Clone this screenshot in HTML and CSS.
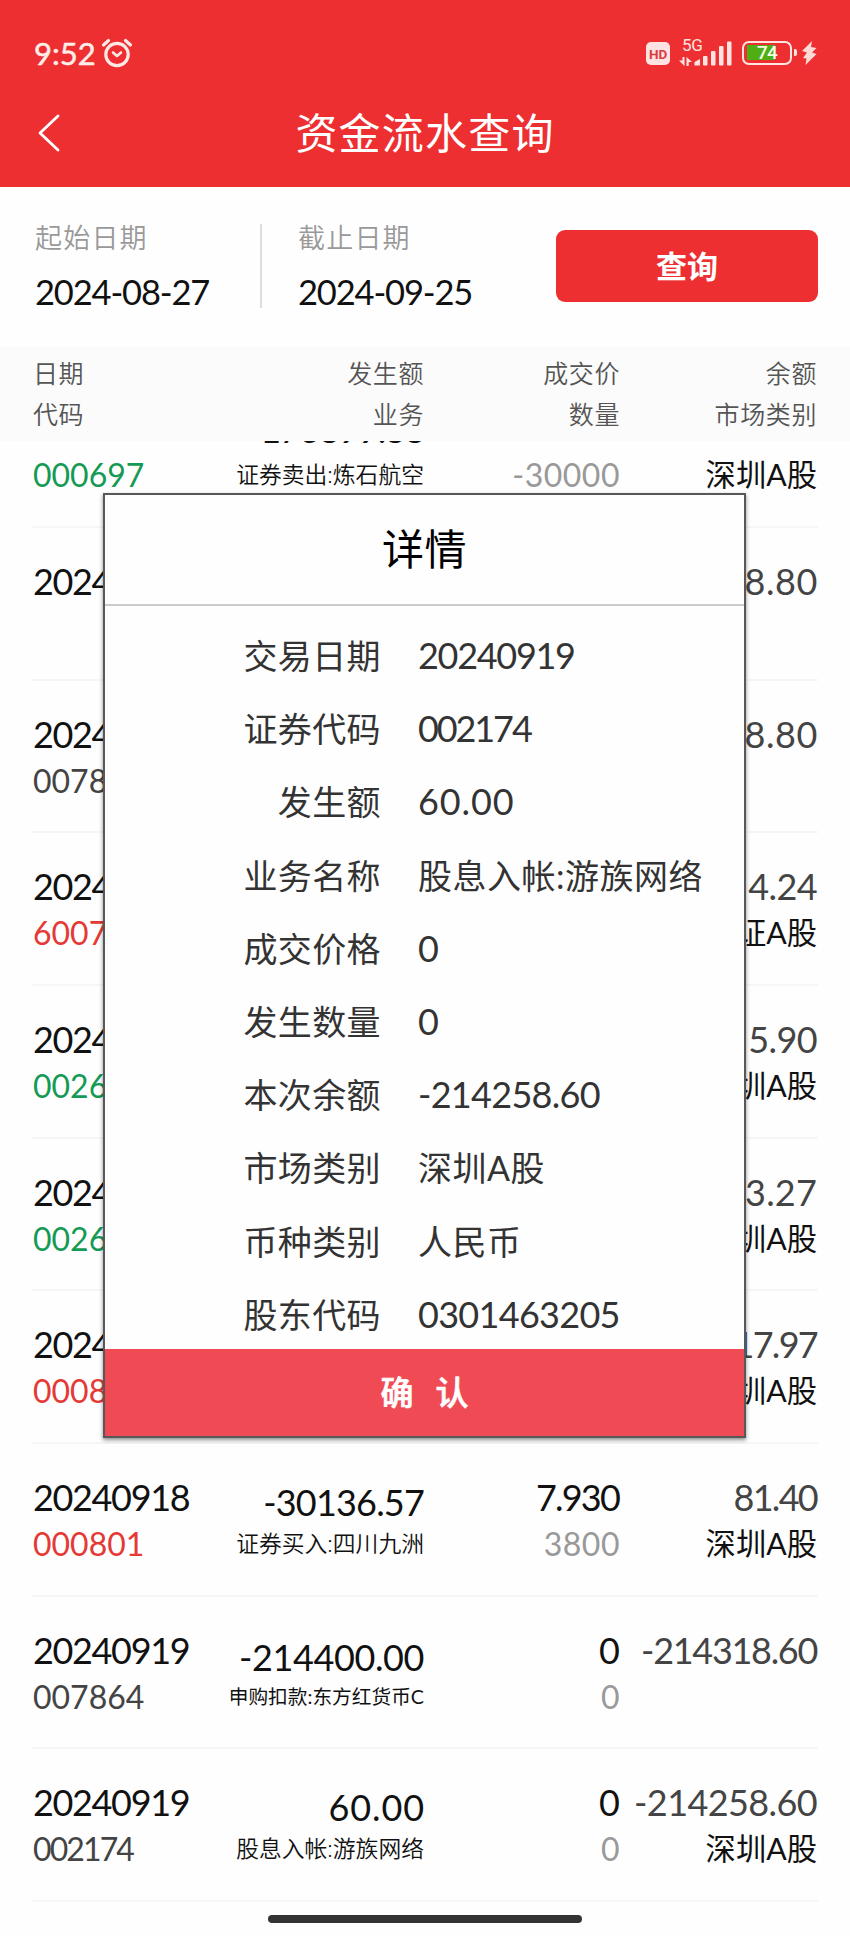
FILE: index.html
```
<!DOCTYPE html>
<html lang="zh-CN">
<head>
<meta charset="utf-8">
<title>资金流水查询</title>
<link rel="stylesheet" href="styles.css">
</head>
<body>
<div class="screen">
  <header class="top">
    <div class="status">
      <span class="clock">9:52</span>
      <svg class="alarm" width="32" height="30" viewBox="0 0 32 30" fill="none" stroke="#ffe9e4" stroke-linecap="round" stroke-linejoin="round"><circle cx="16" cy="16.500" r="11.200" stroke-width="3.200"/><path d="M2.500 7 L7.500 2.500 M29.500 7 L24.500 2.500" stroke-width="3.200"/><path d="M12 14.500 L16 18 L20 14.500" stroke-width="2.600"/></svg>
      <span class="hd">HD</span>
      <div class="signal">
        <span class="net">5G</span>
        <svg width="54" height="28" viewBox="0 0 54 28" fill="#ffe3e0"><path d="M3.500 18 H5.500 V27 L0 21.500 H3.500 Z M7.500 27 V18 L13 23 H9.700 V27 Z"/><path d="M15.500 26.500 V23 L21 20 V26.500 Z"/><rect x="24" y="17" width="4.500" height="9.500" rx="1"/><rect x="32" y="12" width="4.500" height="14.500" rx="1"/><rect x="40" y="7" width="4.500" height="19.500" rx="1"/><rect x="48" y="2.500" width="4.500" height="24" rx="1"/></svg>
      </div>
      <div class="battery"><span class="level">74</span></div>
      <svg class="bolt" width="15" height="24" viewBox="0 0 15 24" fill="#ffd9d6"><path d="M10 0 L0 10 L5 11.500 L1 17 L4.500 17.500 L3.500 24 L14.500 13 L10 11.500 L14.500 7 L9 6 Z"/></svg>
    </div>
    <div class="nav">
      <svg class="back" width="24" height="40" viewBox="0 0 24 40" fill="none" stroke="#fff" stroke-width="2.800" stroke-linecap="round" stroke-linejoin="round"><path d="M21 3 L3 20 L21 37"/></svg>
      <h1 class="title">资金流水查询</h1>
    </div>
  </header>

  <section class="filter">
    <div class="field start"><span class="caption">起始日期</span><span class="date">2024-08-27</span></div>
    <div class="field end"><span class="caption">截止日期</span><span class="date">2024-09-25</span></div>
    <button class="query">查询</button>
  </section>

  <section class="thead">
    <div class="cell"><span>日期</span><span>代码</span></div>
    <div class="cell right"><span>发生额</span><span>业务</span></div>
    <div class="cell right"><span>成交价</span><span>数量</span></div>
    <div class="cell right"><span>余额</span><span>市场类别</span></div>
  </section>

  <main class="list">
    <div class="row scrolled"><div class="col"><b class="code green">000697</b></div><div class="col right"><b class="sum">176899.88</b><b class="biz">证券卖出:炼石航空</b></div><div class="col right"><b class="qty">-30000</b></div><div class="col right"><b class="mkt">深圳A股</b></div></div>
    <div class="row"><div class="col"><b class="day">20240913</b></div><div class="col right"></div><div class="col right"></div><div class="col right"><b class="bal wide">8.80</b></div></div>
    <div class="row"><div class="col"><b class="day">20240913</b><b class="code">007864</b></div><div class="col right"></div><div class="col right"></div><div class="col right"><b class="bal wide">8.80</b></div></div>
    <div class="row"><div class="col"><b class="day">20240918</b><b class="code red">600764</b></div><div class="col right"></div><div class="col right"></div><div class="col right"><b class="bal">4.24</b><b class="mkt">上证A股</b></div></div>
    <div class="row"><div class="col"><b class="day">20240918</b><b class="code green">002640</b></div><div class="col right"></div><div class="col right"></div><div class="col right"><b class="bal">5.90</b><b class="mkt">深圳A股</b></div></div>
    <div class="row"><div class="col"><b class="day">20240918</b><b class="code green">002640</b></div><div class="col right"></div><div class="col right"></div><div class="col right"><b class="bal mid">53.27</b><b class="mkt">深圳A股</b></div></div>
    <div class="row"><div class="col"><b class="day">20240918</b><b class="code red">000801</b></div><div class="col right"></div><div class="col right"></div><div class="col right"><b class="bal tight">17.97</b><b class="mkt">深圳A股</b></div></div>
    <div class="row"><div class="col"><b class="day">20240918</b><b class="code red">000801</b></div><div class="col right"><b class="sum">-30136.57</b><b class="biz">证券买入:四川九洲</b></div><div class="col right"><b class="price four">7.930</b><b class="qty">3800</b></div><div class="col right"><b class="bal tight">81.40</b><b class="mkt">深圳A股</b></div></div>
    <div class="row"><div class="col"><b class="day">20240919</b><b class="code">007864</b></div><div class="col right low"><b class="sum">-214400.00</b><b class="biz small">申购扣款:东方红货币C</b></div><div class="col right"><b class="price">0</b><b class="qty">0</b></div><div class="col right"><b class="bal long">-214318.60</b></div></div>
    <div class="row"><div class="col"><b class="day">20240919</b><b class="code narrow">002174</b></div><div class="col right"><b class="sum wide">60.00</b><b class="biz">股息入帐:游族网络</b></div><div class="col right"><b class="price">0</b><b class="qty">0</b></div><div class="col right"><b class="bal">-214258.60</b><b class="mkt">深圳A股</b></div></div>
  </main>
  <div class="home"></div>

  <div class="dialog">
    <h2 class="dialog-title">详情</h2>
    <dl class="details">
      <dt>交易日期</dt><dd class="eight">20240919</dd>
      <dt>证券代码</dt><dd class="six">002174</dd>
      <dt>发生额</dt><dd class="sixty">60.00</dd>
      <dt>业务名称</dt><dd class="text">股息入帐:游族网络</dd>
      <dt>成交价格</dt><dd>0</dd>
      <dt>发生数量</dt><dd>0</dd>
      <dt>本次余额</dt><dd class="signed">-214258.60</dd>
      <dt>市场类别</dt><dd class="text">深圳A股</dd>
      <dt>币种类别</dt><dd class="text">人民币</dd>
      <dt>股东代码</dt><dd class="ten">0301463205</dd>
    </dl>
    <button class="confirm">确<span class="gap"></span>认</button>
  </div>
</div>
</body>
</html>
```
FILE: styles.css
```
* { box-sizing: border-box; margin: 0; padding: 0; }
body { background: #fff; }
.screen {
  position: relative;
  width: 850px;
  height: 1936px;
  overflow: hidden;
  background: #fefefe;
  font-family: Lato, "Noto Sans CJK SC", sans-serif;
  color: #111;
}
b, h1, h2 { font-weight: 400; }
button { border: 0; font-family: inherit; color: #fff; }

.top { height: 187px; background: #ed2f32; color: #fff; }
.status { display: flex; align-items: center; height: 80px; padding: 26px 33px 0 34px; }
.clock { width: 66px; font-size: 31px; line-height: 40px; font-weight: 400; letter-spacing: 0; color: #ffeee8; white-space: nowrap; -webkit-text-stroke: 0.500px #ffeee8; }
.alarm { margin-left: 1px; }
.hd { margin-left: auto; width: 24px; height: 23px; border-radius: 5px; background: #ffe3e3; color: #dc3b40; font: 700 13.500px/24px Roboto, sans-serif; text-align: center; letter-spacing: -0.2px; }
.signal { position: relative; width: 54px; height: 28px; margin-left: 9px; }
.net { position: absolute; left: 3px; top: -2px; font: 400 17px/17px Roboto, sans-serif; letter-spacing: -0.3px; color: #ffe3e0; }
.battery { position: relative; width: 50px; height: 24px; margin-left: 9px; margin-right: 3px; border: 2.500px solid #ffe6e0; border-radius: 7px; padding: 2px 3px; background: linear-gradient(#4fae14, #4fae14) 3px 2px / 28px 15px no-repeat; }
.battery::after { content: ""; position: absolute; right: -7px; top: 6px; width: 3px; height: 7px; border-radius: 0 2px 2px 0; background: #ffe6e0; }
.level { display: block; text-align: center; font: 500 19px/16px Roboto, sans-serif; letter-spacing: -0.8px; color: #f5ffe8; }
.bolt { margin-left: 7px; }
.nav { position: relative; display: flex; justify-content: center; height: 107px; padding-top: 25px; }
.back { position: absolute; left: 37px; top: 33px; }
.title { font-size: 42px; line-height: 56px; letter-spacing: 1.200px; }

.filter { display: flex; height: 160px; padding: 37px 32px 0 35px; }
.field { display: flex; flex-direction: column; height: 84px; }
.start { width: 227px; border-right: 2px solid #ddd; }
.end { width: 294px; padding-left: 36px; }
.caption { font-size: 27px; line-height: 28px; letter-spacing: 1.200px; color: #999; font-weight: 350; }
.date { margin-top: 19px; font-size: 34.500px; line-height: 42px; letter-spacing: -1.150px; white-space: nowrap; }
.query { width: 262px; height: 72px; margin-top: 6px; border-radius: 9px; background: #ed2f32; font-size: 31px; font-weight: 700; line-height: 70px; }

.thead, .row { display: grid; grid-template-columns: 131px 260px 196px 197px; }
.thead { height: 94px; padding: 6px 33px 0; background: #fbfbfb; color: #555; font-size: 25px; font-weight: 350; letter-spacing: 0.600px; }
.cell { display: flex; flex-direction: column; line-height: 41px; }
.cell.right { text-align: right; }

.list { height: 1461px; overflow: hidden; display: flex; flex-direction: column; justify-content: flex-end; }
.row { flex: none; height: 152.700px; margin: 0 32px; padding: 30px 1px 0; border-bottom: 2px solid #f6f6f6; }
.col { display: flex; flex-direction: column; white-space: nowrap; }
.right { align-items: flex-end; }
.col b { display: block; }
.scrolled .code, .scrolled .qty, .scrolled .mkt { margin-top: 46px; }
.scrolled .sum { margin: 1px 0 4px; letter-spacing: -1.300px; }
.day { font-size: 36px; line-height: 46px; letter-spacing: -1.350px; }
.code { font-size: 32px; line-height: 48px; color: #444; }
.code.narrow { letter-spacing: -1.900px; }
.code.green { color: #159a55; }
.code.red { color: #e53935; }
.sum { margin-top: 5px; font-size: 36px; line-height: 46px; letter-spacing: -0.800px; }
.sum.wide { letter-spacing: 0.900px; margin-right: -1px; }
.biz { font-size: 22.800px; line-height: 37px; font-weight: 350; }
.biz.small { font-size: 19.700px; line-height: 33px; font-weight: 400; }
.low .sum { margin-top: 7px; letter-spacing: -0.400px; }
.price { font-size: 36px; line-height: 46px; }
.price.four { letter-spacing: -1.800px; margin-right: 1px; }
.qty { font-size: 32px; line-height: 48px; letter-spacing: 0.500px; color: #999; }
.bal { font-size: 36px; line-height: 46px; letter-spacing: -0.600px; color: #444; }
.bal.wide { letter-spacing: 0.600px; margin-right: -1px; }
.bal.mid { letter-spacing: 0.200px; }
.bal.tight { letter-spacing: -1.700px; }
.bal.long { letter-spacing: -1.300px; }
.mkt { font-size: 30.300px; line-height: 46px; }
.home { width: 314px; height: 8px; margin: 13px 0 0 268px; border-radius: 4px; background: #333; }

.dialog {
  position: absolute;
  left: 103px;
  top: 493px;
  width: 643px;
  height: 945px;
  display: flex;
  flex-direction: column;
  background: #fefefe;
  border: 2px solid #58585a;
  box-shadow: 0 2px 4px rgba(0, 0, 0, 0.45);
}
.dialog-title { flex: none; height: 111px; border-bottom: 2px solid #ccc; text-align: center; font-size: 42px; line-height: 108px; letter-spacing: 0.500px; color: #000; }
.details { flex: 1; display: grid; grid-template-columns: 276px 1fr; grid-auto-rows: 73.200px; padding-top: 13px; color: #333; font-size: 34px; line-height: 73px; overflow: hidden; }
.details dt { text-align: right; letter-spacing: 0.400px; }
.details dd { padding-left: 37px; white-space: nowrap; font-size: 36px; }
.details dd.text { font-size: 34px; letter-spacing: 0.500px; }
.details dd.eight { letter-spacing: -1.300px; }
.details dd.six { letter-spacing: -2.100px; }
.details dd.sixty { letter-spacing: 0.900px; }
.details dd.signed { letter-spacing: -0.700px; }
.details dd.ten { letter-spacing: -0.700px; }
.confirm { flex: none; height: 87px; background: #f04b55; font-size: 33px; font-weight: 500; line-height: 82px; padding-bottom: 2px; -webkit-text-stroke: 0.700px #fff; }
.gap { display: inline-block; width: 22px; }
```
